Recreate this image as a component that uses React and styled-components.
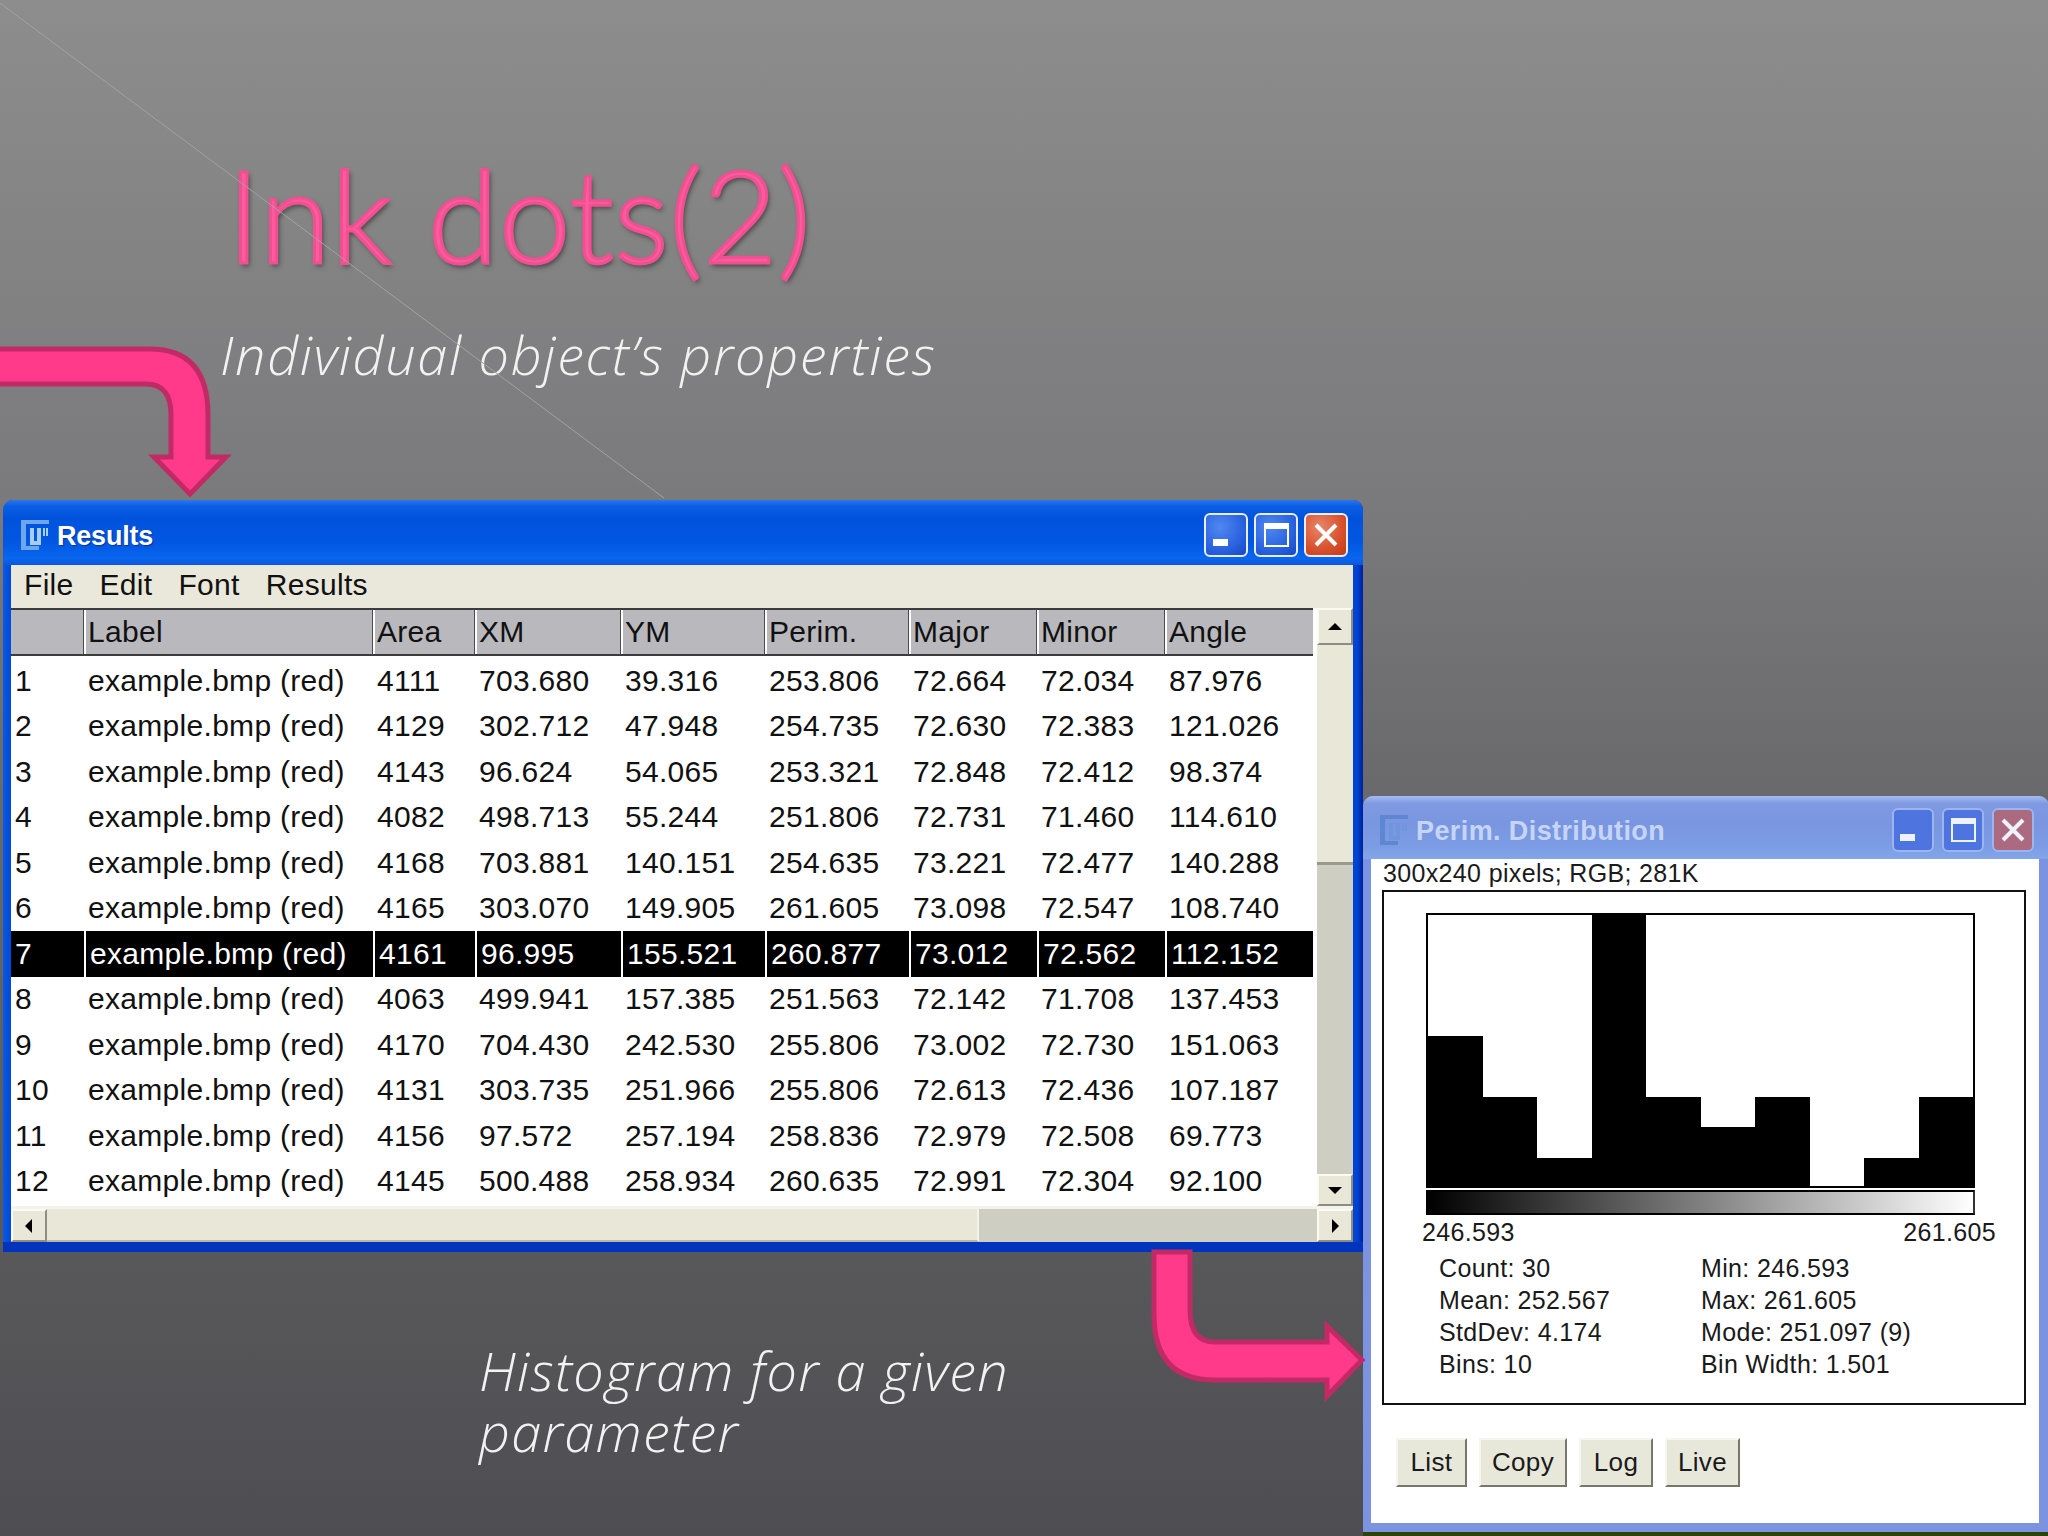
import React from 'react';
import styled, { createGlobalStyle } from 'styled-components';

const rows = [
  ['1', 'example.bmp (red)', '4111', '703.680', '39.316', '253.806', '72.664', '72.034', '87.976'],
  ['2', 'example.bmp (red)', '4129', '302.712', '47.948', '254.735', '72.630', '72.383', '121.026'],
  ['3', 'example.bmp (red)', '4143', '96.624', '54.065', '253.321', '72.848', '72.412', '98.374'],
  ['4', 'example.bmp (red)', '4082', '498.713', '55.244', '251.806', '72.731', '71.460', '114.610'],
  ['5', 'example.bmp (red)', '4168', '703.881', '140.151', '254.635', '73.221', '72.477', '140.288'],
  ['6', 'example.bmp (red)', '4165', '303.070', '149.905', '261.605', '73.098', '72.547', '108.740'],
  ['7', 'example.bmp (red)', '4161', '96.995', '155.521', '260.877', '73.012', '72.562', '112.152'],
  ['8', 'example.bmp (red)', '4063', '499.941', '157.385', '251.563', '72.142', '71.708', '137.453'],
  ['9', 'example.bmp (red)', '4170', '704.430', '242.530', '255.806', '73.002', '72.730', '151.063'],
  ['10', 'example.bmp (red)', '4131', '303.735', '251.966', '255.806', '72.613', '72.436', '107.187'],
  ['11', 'example.bmp (red)', '4156', '97.572', '257.194', '258.836', '72.979', '72.508', '69.773'],
  ['12', 'example.bmp (red)', '4145', '500.488', '258.934', '260.635', '72.991', '72.304', '92.100'],
];

const headers = ['', 'Label', 'Area', 'XM', 'YM', 'Perim.', 'Major', 'Minor', 'Angle'];
const menus = ['File', 'Edit', 'Font', 'Results'];
const counts = [5, 3, 1, 9, 3, 2, 3, 0, 1, 3];
const stats = [
  ['Count: 30', 'Min: 246.593'],
  ['Mean: 252.567', 'Max: 261.605'],
  ['StdDev: 4.174', 'Mode: 251.097 (9)'],
  ['Bins: 10', 'Bin Width: 1.501'],
];
const actions = [['List', 71], ['Copy', 88], ['Log', 74], ['Live', 75]];

const GlobalStyle = createGlobalStyle`
  html, body {
    margin: 0;
    padding: 0;
    background: #4d4c50;
  }
`;

const Slide = styled.div`
  position: relative;
  width: 2048px;
  height: 1536px;
  overflow: hidden;
  display: grid;
  grid-template-columns: 1363px 685px;
  background: linear-gradient(180deg, #8d8d8d 0%, #7a797b 33%, #69686a 52%, #4e4d51 100%);
  font-family: "Liberation Sans", Arial, sans-serif;
`;

const Overlay = styled.svg`
  position: absolute;
  top: 0;
  left: 0;
  pointer-events: none;
`;

const LeftColumn = styled.div`
  display: flex;
  flex-direction: column;
  padding-left: 3px;
`;

const Heading = styled.div`
  height: 500px;
  box-sizing: border-box;
  padding: 140px 0 0 224px;
`;

const Title = styled.h1`
  margin: 0;
  font-family: Lato, "Noto Sans", sans-serif;
  font-weight: 300;
  font-size: 128px;
  line-height: 148px;
  letter-spacing: 0.6px;
  color: #ff5aa0;
  -webkit-text-stroke: 3px #f0508f;
  text-shadow: 2px 3px 5px rgba(40, 40, 40, 0.75);
`;

const Subtitle = styled.div`
  margin: 36px 0 0 -7px;
  font-family: "Open Sans", Lato, sans-serif;
  font-weight: 300;
  font-style: italic;
  font-size: 54px;
  line-height: 60px;
  letter-spacing: 1.7px;
  white-space: nowrap;
  color: #f2f2f2;
`;

const Caption = styled.div`
  margin: 88px 0 0 476px;
  font-family: "Open Sans", Lato, sans-serif;
  font-weight: 300;
  font-style: italic;
  font-size: 54px;
  line-height: 61px;
  letter-spacing: 1.3px;
  color: #f2f2f2;
`;

const ResultsWindow = styled.div`
  display: flex;
  flex-direction: column;
  height: 752px;
  box-sizing: border-box;
  padding: 0 10px 10px 8px;
  border-radius: 10px 10px 0 0;
  background: linear-gradient(90deg, #0a5ae6 0, #0048d8 8px, #0044d4 calc(100% - 6px), #00209c 100%);
  box-shadow: inset 0 -10px 0 #0034bc, inset 0 -3px 0 #00239c;
`;

const TitleBar = styled.div`
  display: flex;
  align-items: center;
  flex: none;
  height: ${(p) => p.$height}px;
  box-sizing: border-box;
  margin: 0 -10px 0 -8px;
  padding: 5px 15px 0 ${(p) => p.$left}px;
  border-radius: 10px 10px 0 0;
  background: ${(p) => p.$active
    ? 'linear-gradient(180deg, #2a78f0 0, #0b5ee4 6px, #0052dc 28%, #0157e2 65%, #0a66ee 90%, #0a58dc 100%)'
    : 'linear-gradient(180deg, #a3bcf0 0, #7f9ae2 12%, #7a96e0 45%, #7b9ce4 80%, #82a6ea 100%)'};
`;

const AppIcon = styled.svg`
  flex: none;
  width: 28px;
  height: 30px;
  margin-right: 8px;
`;

const WindowName = styled.span`
  flex: 1;
  padding-top: 2px;
  font-weight: 700;
  font-size: 27px;
  letter-spacing: ${(p) => (p.$active ? '-0.2px' : '0.4px')};
  color: ${(p) => (p.$active ? '#fff' : '#c6d5f6')};
  text-shadow: ${(p) => (p.$active ? '1px 1px 1px #0a2f9c' : 'none')};
`;

const Controls = styled.div`
  display: flex;
  gap: ${(p) => p.$gap}px;
`;

const ControlButton = styled.div`
  display: flex;
  align-items: center;
  justify-content: center;
  width: ${(p) => p.$size}px;
  height: 44px;
  box-sizing: border-box;
  border: 2px solid ${(p) => (p.$active ? '#e8eefc' : '#9db4ee')};
  border-radius: 6px;
  background: ${(p) => (p.$close
    ? (p.$active ? 'radial-gradient(circle at 35% 30%, #e8866a, #d8502c 60%, #c23a14)' : '#ac6a80')
    : (p.$active ? 'radial-gradient(circle at 35% 30%, #4f88f0, #2a62e0 60%, #1746c4)' : '#4e74e0'))};
`;

const MenuBar = styled.div`
  display: flex;
  align-items: center;
  flex: none;
  height: 43px;
  box-sizing: border-box;
  padding: 0 0 3px 13px;
  gap: 26px;
  background: #e9e8da;
  font-size: 30px;
  letter-spacing: 0.3px;
  color: #111;
`;

const TableArea = styled.div`
  display: grid;
  grid-template-columns: 1fr 36px;
  grid-template-rows: 1fr 36px;
  flex: 1;
  min-height: 0;
  background: #fff;
`;

const Table = styled.div`
  display: flex;
  flex-direction: column;
  min-width: 0;
`;

const TableRow = styled.div`
  display: grid;
  grid-template-columns: 73px 289px 102px 146px 144px 144px 128px 128px 148px;
  width: 1302px;
  height: ${(p) => (p.$header ? 48 : 45.5)}px;
  flex: none;
  box-sizing: border-box;
  font-size: 30px;
  letter-spacing: 0.3px;
  background: ${(p) => (p.$header ? '#b9b8bc' : p.$selected ? '#000' : '#fff')};
  color: ${(p) => (p.$selected ? '#fff' : '#111')};
  ${(p) => p.$header && `
    border-top: 2px solid #3c3c3c;
    border-bottom: 2px solid #3c3c3c;
    margin-bottom: 2px;
  `}
`;

const Cell = styled.div`
  display: flex;
  align-items: center;
  padding-left: ${(p) => (p.$first ? 4 : p.$header ? 2 : 4)}px;
  white-space: nowrap;
  ${(p) => !p.$first && p.$header && 'border-left: 2px solid #fff; box-shadow: -1px 0 0 #4a4a4a;'}
  ${(p) => !p.$first && p.$selected && 'border-left: 2px solid #fff;'}
`;

const VerticalBar = styled.div`
  display: flex;
  flex-direction: column;
  background: #cfcec3;
`;

const HorizontalBar = styled.div`
  grid-column: 1 / -1;
  display: flex;
  background: #cfcec3;
  border-top: 3px solid #f4f4ec;
`;

const Thumb = styled.div`
  background: #e8e7d8;
  flex: none;
  ${(p) => (p.$vertical ? `height: ${p.$size}px;` : `width: ${p.$size}px;`)}
  border-bottom: ${(p) => (p.$vertical ? '3px solid #9a998c' : '2px solid #b8b7a8')};
  border-right: ${(p) => (p.$vertical ? '0' : '2px solid #f4f4ec')};
`;

const Spacer = styled.div`
  flex: 1;
`;

const ArrowButton = styled.div`
  display: flex;
  align-items: center;
  justify-content: center;
  flex: none;
  width: 36px;
  height: ${(p) => p.$height || 36}px;
  box-sizing: border-box;
  background: #e8e7d8;
  border: 2px solid;
  border-color: #fbfbf4 #8e8d80 #8e8d80 #fbfbf4;
`;

const Triangle = styled.svg`
  width: 18px;
  height: 18px;
`;

const RightColumn = styled.div`
  display: flex;
  flex-direction: column;
  padding-top: 796px;
`;

const HistogramWindow = styled.div`
  display: flex;
  flex-direction: column;
  flex: none;
  height: 736px;
  box-sizing: border-box;
  padding: 0 9px 9px 8px;
  border-radius: 10px 10px 0 0;
  background: #7b93e0;
`;

const DesktopStrip = styled.div`
  flex: 1;
  background: #2c4209;
`;

const HistogramBody = styled.div`
  flex: 1;
  display: flex;
  flex-direction: column;
  background: #fff;
  font-size: 25px;
  letter-spacing: 0.35px;
  color: #1a1a1a;
`;

const ImageInfo = styled.div`
  height: 31px;
  line-height: 29px;
  padding-left: 12px;
  flex: none;
`;

const PlotFrame = styled.div`
  flex: none;
  height: 515px;
  box-sizing: border-box;
  margin: 0 13px 0 11px;
  padding: 21px 0 0 42px;
  border: 2px solid #111;
`;

const Bars = styled.div`
  display: flex;
  align-items: flex-end;
  width: 549px;
  height: 275px;
  box-sizing: border-box;
  border: solid #000;
  border-width: 2px 2px 0;
`;

const Bar = styled.div`
  flex: 1;
  background: #000;
`;

const Ramp = styled.div`
  width: 549px;
  height: 25px;
  margin-top: 2px;
  box-sizing: border-box;
  border: 2px solid #000;
  border-right-color: #333;
  background: linear-gradient(90deg, #000, #fff);
`;

const RampLabels = styled.div`
  display: flex;
  justify-content: space-between;
  width: 574px;
  margin: 2px 0 0 -4px;
  line-height: 30px;
`;

const StatGrid = styled.div`
  display: grid;
  grid-template-columns: 262px 1fr;
  grid-auto-rows: 32px;
  align-items: center;
  margin: 5px 0 0 13px;
`;

const ButtonRow = styled.div`
  display: flex;
  gap: 12px;
  margin-top: 33px;
  padding-left: 25px;
`;

const ActionButton = styled.div`
  display: flex;
  align-items: center;
  justify-content: center;
  width: ${(p) => p.$width}px;
  height: 49px;
  box-sizing: border-box;
  background: #e8e8da;
  border: 2px solid;
  border-color: #f6f6ee #77776a #77776a #f6f6ee;
  font-size: 26px;
`;

const ImageJIcon = ({ active }) => {
  const frame = active ? '#6ea6ea' : '#5f86d0';
  const inner = active ? '#a5cdf6' : '#6f96dc';
  return (
    <AppIcon viewBox="0 0 28 30">
      <path d="M0 0H28V4H5V26H18V30H0Z" fill={frame} />
      <path d="M9 8H13V21H16V8H20V25H9Z" fill={inner} />
      <path d="M22 8H24V16H22ZM25 8H27V16H25Z" fill={inner} />
    </AppIcon>
  );
};

const WindowControls = ({ active, gap, size }) => {
  const color = active ? '#fff' : '#eef2fc';
  return (
    <Controls $gap={gap}>
      <ControlButton $active={active} $size={size}>
        <svg width="32" height="32" viewBox="0 0 32 32">
          <rect x="3" y="20" width="15" height="7" fill={color} />
        </svg>
      </ControlButton>
      <ControlButton $active={active} $size={size}>
        <svg width="32" height="32" viewBox="0 0 32 32">
          <path d="M5 5H28V27H5Z" fill="none" stroke={color} strokeWidth="2" />
          <rect x="5" y="5" width="23" height="5" fill={color} />
        </svg>
      </ControlButton>
      <ControlButton $active={active} $size={size} $close>
        <svg width="32" height="32" viewBox="0 0 32 32">
          <path d="M6 6L26 26M26 6L6 26" stroke={color} strokeWidth="4" />
        </svg>
      </ControlButton>
    </Controls>
  );
};

const ScrollArrow = ({ d, height }) => (
  <ArrowButton $height={height}>
    <Triangle viewBox="0 0 18 18">
      <path d={d} fill="#000" />
    </Triangle>
  </ArrowButton>
);

export default function App() {
  return (
    <Slide>
      <GlobalStyle />
      <LeftColumn>
        <Heading>
          <Title>Ink dots(2)</Title>
          <Subtitle>Individual object’s properties</Subtitle>
        </Heading>

        <ResultsWindow>
          <TitleBar $active $height={65} $left={18}>
            <ImageJIcon active />
            <WindowName $active>Results</WindowName>
            <WindowControls active gap={6} size={44} />
          </TitleBar>
          <MenuBar>
            {menus.map((name) => (
              <span key={name}>{name}</span>
            ))}
          </MenuBar>
          <TableArea>
            <Table>
              <TableRow $header>
                {headers.map((name, i) => (
                  <Cell key={i} $header $first={i === 0}>{name}</Cell>
                ))}
              </TableRow>
              {rows.map((row) => (
                <TableRow key={row[0]} $selected={row[0] === '7'}>
                  {row.map((value, i) => (
                    <Cell key={i} $first={i === 0} $selected={row[0] === '7'}>{value}</Cell>
                  ))}
                </TableRow>
              ))}
            </Table>
            <VerticalBar>
              <ScrollArrow d="M9 5L16 12H2Z" height={37} />
              <Thumb $vertical $size={217} />
              <Spacer />
              <ScrollArrow d="M9 13L2 6H16Z" height={32} />
            </VerticalBar>
            <HorizontalBar>
              <ScrollArrow d="M5 9L12 2V16Z" height={33} />
              <Thumb $size={930} />
              <Spacer />
              <ScrollArrow d="M13 9L6 2V16Z" height={33} />
            </HorizontalBar>
          </TableArea>
        </ResultsWindow>

        <Caption>
          Histogram for a given
          <br />
          parameter
        </Caption>
      </LeftColumn>

      <RightColumn>
        <HistogramWindow>
          <TitleBar $height={63} $left={17}>
            <ImageJIcon />
            <WindowName>Perim. Distribution</WindowName>
            <WindowControls gap={8} size={42} />
          </TitleBar>
          <HistogramBody>
            <ImageInfo>300x240 pixels; RGB; 281K</ImageInfo>
            <PlotFrame>
              <Bars>
                {counts.map((count, i) => (
                  <Bar key={i} style={{ height: Math.max(count * 30.5, 2) }} />
                ))}
              </Bars>
              <Ramp />
              <RampLabels>
                <span>246.593</span>
                <span>261.605</span>
              </RampLabels>
              <StatGrid>
                {stats.flat().map((text) => (
                  <span key={text}>{text}</span>
                ))}
              </StatGrid>
            </PlotFrame>
            <ButtonRow>
              {actions.map(([label, width]) => (
                <ActionButton key={label} $width={width}>{label}</ActionButton>
              ))}
            </ButtonRow>
          </HistogramBody>
        </HistogramWindow>
        <DesktopStrip />
      </RightColumn>

      <Overlay width="2048" height="1536" viewBox="0 0 2048 1536">
        <path d="M0 3L664 498" stroke="#a2a2a2" strokeWidth="1" fill="none" />
        <path
          d="M-6 349H150Q208 349 208 415V457H226L190 494L154 457H171V415Q171 384 146 384H-6Z"
          fill="#ff3a8a"
          stroke="#c22a66"
          strokeWidth="5"
        />
        <path
          d="M1154 1252H1190V1310Q1190 1342 1215 1342H1327V1326L1362 1360L1327 1396V1380H1215Q1154 1380 1154 1315Z"
          fill="#ff3a8a"
          stroke="#c22a66"
          strokeWidth="5"
        />
      </Overlay>
    </Slide>
  );
}
